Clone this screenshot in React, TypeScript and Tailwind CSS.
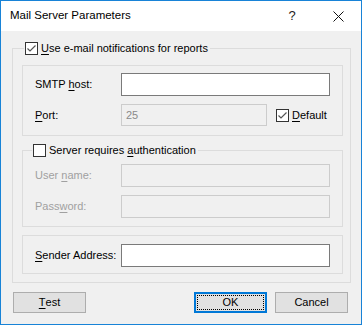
import React from "react";

const font = { fontFamily: '"Liberation Sans", Arial, sans-serif' };

function Check({ checked }: { checked: boolean }) {
  return (
    <span className="inline-flex w-[13px] h-[13px] shrink-0 border border-[#333333] bg-white items-center justify-center">
      {checked && (
        <svg width="11" height="11" viewBox="0 0 11 11">
          <path d="M1.5 5.5 L4 8 L9.5 2.5" fill="none" stroke="#555555" strokeWidth="1.2" />
        </svg>
      )}
    </span>
  );
}

function U({ children }: { children: React.ReactNode }) {
  return <span className="underline underline-offset-[2px]">{children}</span>;
}

function Input({ disabled, value, w = "w-[209px]", h = "h-[23px]" }: { disabled?: boolean; value?: string; w?: string; h?: string }) {
  return (
    <div
      className={`${w} ${h} border flex items-center px-[4px] text-[11px] ${
        disabled ? "border-[#cccccc] bg-[#f0f0f0] text-[#8a8a8a]" : "border-[#7a7a7a] bg-white text-black"
      }`}
    >
      {value}
    </div>
  );
}

export default function App() {
  return (
    <div
      className="w-[362px] h-[325px] border border-[#1883d7] bg-[#f0f0f0] flex flex-col text-[11px] text-black select-none"
      style={font}
    >
      {/* Title bar */}
      <div className="h-[30px] bg-white flex items-center shrink-0">
        <div className="pl-[9px] text-[11.5px] flex-1">Mail Server Parameters</div>
        <div className="w-[46px] flex justify-center text-[13px] text-[#222]">?</div>
        <div className="w-[46px] flex justify-center">
          <svg width="11" height="11" viewBox="0 0 11 11">
            <path d="M0.5 0.5 L10.5 10.5 M10.5 0.5 L0.5 10.5" stroke="#111" strokeWidth="1" />
          </svg>
        </div>
      </div>

      {/* Outer group */}
      <div className="relative ml-[11px] mt-[17px] w-[339px] h-[235px] border border-[#dcdcdc] pt-[16px] pl-[9px] flex flex-col">
        <div className="absolute left-[11px] top-[-7px] bg-[#f0f0f0] flex items-center gap-[3px] pl-[1px] pr-[2px] h-[13px]">
          <Check checked />
          <span>
            <U>U</U>se e-mail notifications for reports
          </span>
        </div>

        {/* SMTP group */}
        <div className="w-[321px] h-[71px] border border-[#dcdcdc] pt-[7px] pl-[12px] flex flex-col gap-[8px]">
          <div className="flex items-center">
            <span className="w-[86px]">
              SMTP <U>h</U>ost:
            </span>
            <Input />
          </div>
          <div className="flex items-center">
            <span className="w-[86px]">
              <U>P</U>ort:
            </span>
            <Input disabled value="25" w="w-[146px]" h="h-[22px]" />
            <div className="flex items-center ml-[9px] gap-[3px]">
              <Check checked />
              <span>
                <U>D</U>efault
              </span>
            </div>
          </div>
        </div>

        {/* Auth group */}
        <div className="relative mt-[14px] w-[321px] h-[77px] border border-[#dcdcdc] pt-[13px] pl-[12px] flex flex-col gap-[8px]">
          <div className="absolute left-[9px] top-[-7px] bg-[#f0f0f0] flex items-center gap-[3px] pl-[1px] pr-[2px] h-[13px]">
            <Check checked={false} />
            <span>
              Server requires <U>a</U>uthentication
            </span>
          </div>
          <div className="flex items-center">
            <span className="w-[86px] text-[#a0a0a0]">
              User <U>n</U>ame:
            </span>
            <Input disabled />
          </div>
          <div className="flex items-center">
            <span className="w-[86px] text-[#a0a0a0]">
              Pass<U>w</U>ord:
            </span>
            <Input disabled />
          </div>
        </div>

        {/* Sender group */}
        <div className="mt-[8px] w-[321px] h-[39px] border border-[#dcdcdc] pt-[8px] pl-[12px] flex flex-col">
          <div className="flex items-center">
            <span className="w-[86px]">
              <U>S</U>ender Address:
            </span>
            <Input />
          </div>
        </div>
      </div>

      {/* Buttons */}
      <div className="flex mt-[9px] pl-[12px]">
        <button className="w-[73px] h-[21px] border border-[#adadad] bg-[#e1e1e1] flex items-center justify-center text-[11px]">
          <U>T</U>est
        </button>
        <button className="ml-[108px] w-[73px] h-[21px] border-2 border-[#0078d7] bg-[#e1e1e1] flex items-center justify-center p-[1px] text-[11px]">
          <span className="w-full h-full border border-dotted border-black flex items-center justify-center">OK</span>
        </button>
        <button className="ml-[8px] w-[73px] h-[21px] border border-[#adadad] bg-[#e1e1e1] flex items-center justify-center text-[11px]">
          Cancel
        </button>
      </div>
    </div>
  );
}
